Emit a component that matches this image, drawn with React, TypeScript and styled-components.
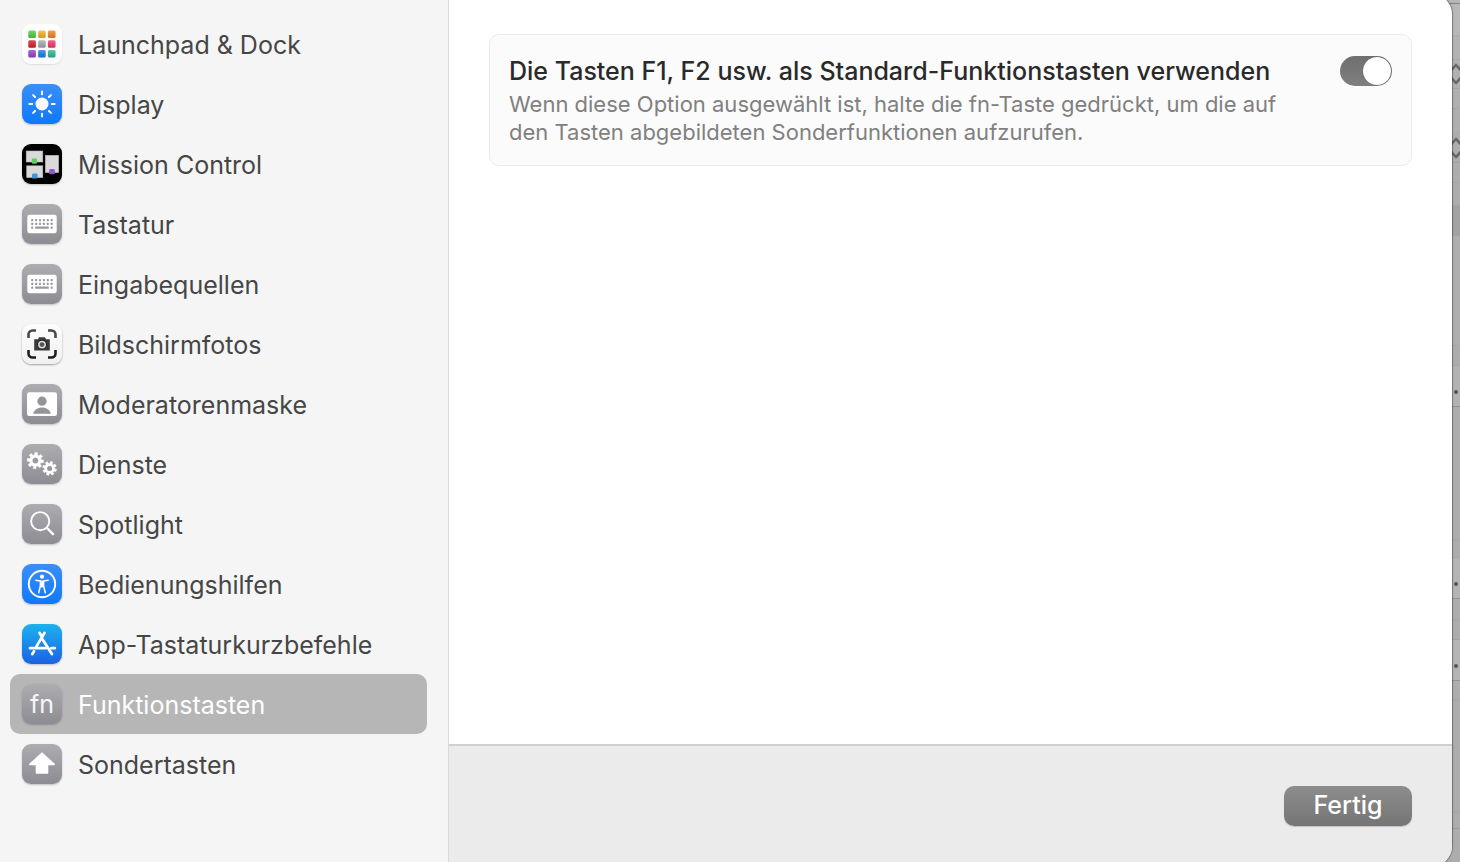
import React, { useId, useState } from 'react';
import styled, { createGlobalStyle } from 'styled-components';

const GlobalStyle = createGlobalStyle`
  *, *::before, *::after { box-sizing: border-box; }
  body {
    margin: 0;
    background: #adadad;
    font-family: Inter, "Liberation Sans", sans-serif;
    -webkit-font-smoothing: antialiased;
  }
  button { font: inherit; border: 0; cursor: default; }
`;

const Page = styled.div`
  display: flex;
  min-height: 100vh;
  overflow: hidden;
`;

const Sheet = styled.section`
  position: relative;
  z-index: 1;
  display: flex;
  flex: 1;
  min-width: 0;
  margin: -6px 0 -4px;
  overflow: hidden;
  background: #fff;
  border-radius: 0 20px 20px 0;
  box-shadow: 0 0 1px 1px rgba(0, 0, 0, 0.35);
`;

const Sidebar = styled.nav`
  flex: 0 0 449px;
  padding: 20px 21px 20px 10px;
  background: #f5f5f5;
  border-right: 1px solid #dadada;
`;

const SidebarList = styled.ul`
  margin: 0;
  padding: 0;
  list-style: none;
`;

const SidebarItem = styled.button<{ $selected: boolean }>`
  display: flex;
  align-items: center;
  gap: 16px;
  width: 100%;
  height: 60px;
  padding: 0 12px;
  border-radius: 10px;
  background: ${(p) => (p.$selected ? '#b6b6b6' : 'transparent')};
  color: ${(p) => (p.$selected ? '#fff' : '#464646')};
  font-size: 25px;
  line-height: 32px;
  text-align: left;
`;

const SidebarLabel = styled.span`
  padding-top: 2px;
`;

const tileFills = {
  white: 'linear-gradient(#ffffff, #fbfbfb)',
  paper: 'linear-gradient(#fdfdfd, #f0f0f0)',
  blue: 'linear-gradient(#3b8ff8, #0f78fb)',
  store: 'linear-gradient(#1db2ee, #1b62e4)',
  black: '#000',
  gray: 'linear-gradient(#acacb1, #8c8c92)',
};

const tileShadows: Partial<Record<keyof typeof tileFills, string>> = {
  white: '0 1px 2px rgba(0, 0, 0, 0.1)',
  paper: '0 1px 2px rgba(0, 0, 0, 0.35)',
};

const Tile = styled.span<{ $fill: keyof typeof tileFills }>`
  display: flex;
  flex: none;
  align-items: center;
  justify-content: center;
  width: 40px;
  height: 40px;
  border-radius: 9px;
  background: ${(p) => tileFills[p.$fill]};
  box-shadow: ${(p) => tileShadows[p.$fill] ?? '0 1px 2px rgba(0, 0, 0, 0.22)'};
  color: #f6f6f6;

  svg { display: block; width: 40px; height: 40px; }
`;

const KeyLabel = styled.span`
  font-size: 25px;
  font-weight: 400;
  line-height: 40px;
`;

const Pane = styled.div`
  display: flex;
  flex: 1;
  flex-direction: column;
  min-width: 0;
`;

const Content = styled.main`
  flex: 1;
  padding: 40px;
`;

const OptionCard = styled.div`
  display: flex;
  align-items: flex-start;
  justify-content: space-between;
  gap: 40px;
  padding: 20px 19px 19px;
  border: 1px solid #ebebeb;
  border-radius: 10px;
  background: #fbfbfb;
`;

const OptionText = styled.div`
  max-width: 790px;
`;

const OptionTitle = styled.label`
  display: block;
  color: #2a2a2a;
  font-size: 25px;
  font-weight: 500;
  line-height: 32px;
`;

const OptionHint = styled.p`
  margin: 3px 0 0;
  color: #808080;
  font-size: 22px;
  line-height: 28px;
`;

const Switch = styled.input`
  display: flex;
  flex: none;
  justify-content: flex-start;
  width: 52px;
  height: 30px;
  margin: 1px 0 0;
  padding: 1px;
  appearance: none;
  border-radius: 15px;
  background: #c8c8c8;

  &::before {
    content: '';
    width: 28px;
    height: 28px;
    border-radius: 50%;
    background: #fff;
    box-shadow: 0 0 1px rgba(0, 0, 0, 0.5);
  }

  &:checked {
    justify-content: flex-end;
    background: linear-gradient(#6f6f6f, #808080);
  }
`;

const Footer = styled.footer`
  display: flex;
  justify-content: flex-end;
  padding: 40px;
  border-top: 2px solid #d0d0d0;
  background: #ebebeb;
`;

const DoneButton = styled.button`
  width: 128px;
  height: 40px;
  padding: 0 0 2px;
  border-radius: 10px;
  background: linear-gradient(#8d8d8d, #757575);
  box-shadow: 0 1px 1px rgba(0, 0, 0, 0.18);
  color: #fff;
  font-size: 25px;
  font-weight: 500;
  line-height: 36px;
`;

const Backdrop = styled.div`
  display: flex;
  flex: 0 0 24px;
  flex-direction: column;
  margin-left: -16px;
  height: 100vh;
  overflow: hidden;
  background: #adadad;
`;

const Band = styled.div<{ $height: number; $shade: string; $edge: string }>`
  display: flex;
  flex: none;
  align-items: center;
  justify-content: flex-end;
  height: ${(p) => p.$height}px;
  border-bottom: 1px solid ${(p) => p.$edge};
  background: ${(p) => p.$shade};
`;

const Dot = styled.span`
  width: 4px;
  height: 4px;
  margin: 12px 2px 0 0;
  border-radius: 50%;
  background: #555;
`;

type Mark = 'stepper' | 'dot';
const bands: { height: number; shade: string; edge: string; mark?: Mark }[] = [
  { height: 4, shade: '#b6b6b6', edge: '#858585' },
  { height: 32, shade: '#b8b8b8', edge: '#acacac' },
  { height: 24, shade: '#b3b3b3', edge: '#a9a9a9' },
  { height: 29, shade: '#b0b0b0', edge: '#a4a4a4', mark: 'stepper' },
  { height: 20, shade: '#b0b0b0', edge: '#a6a6a6' },
  { height: 24, shade: '#afafaf', edge: '#aaaaaa' },
  { height: 30, shade: '#adadad', edge: '#a2a2a2', mark: 'stepper' },
  { height: 20, shade: '#adadad', edge: '#a4a4a4' },
  { height: 23, shade: '#adadad', edge: '#a4a4a4' },
  { height: 30, shade: '#a2a2a2', edge: '#a4a4a4' },
  { height: 110, shade: '#aeaeae', edge: '#a4a4a4' },
  { height: 20, shade: '#acacac', edge: '#a4a4a4' },
  { height: 41, shade: '#b2b2b2', edge: '#919191', mark: 'dot' },
  { height: 133, shade: '#adadad', edge: '#a4a4a4' },
  { height: 18, shade: '#acacac', edge: '#a4a4a4' },
  { height: 41, shade: '#b4b4b4', edge: '#939393', mark: 'dot' },
  { height: 21, shade: '#adadad', edge: '#a4a4a4' },
  { height: 20, shade: '#acacac', edge: '#a4a4a4' },
  { height: 41, shade: '#b4b4b4', edge: '#939393', mark: 'dot' },
  { height: 19, shade: '#adadad', edge: '#a4a4a4' },
  { height: 113, shade: '#acacac', edge: '#a4a4a4' },
  { height: 16, shade: '#acacac', edge: '#9c9c9c' },
];

const Stepper = () => (
  <svg width="10" height="22" viewBox="0 0 10 22" fill="none" stroke="#666" strokeWidth="2.4">
    <path d="M1 7.5 6 2l5 5.5M1 14.5 6 20l5-5.5" />
  </svg>
);

const LaunchpadIcon = () => {
  const rows = [
    ['#4fd14b', '#f7b52c', '#f5882a'],
    ['#d8262f', '#a9adb3', '#f23e6d'],
    ['#9a45cf', '#1f83e8', '#35b89b'],
  ];
  const shadeId = useId();
  return (
    <svg viewBox="0 0 40 40" aria-hidden="true">
      <defs>
        <linearGradient id={shadeId} x2="0" y2="1">
          <stop offset="0" stopColor="#fff" stopOpacity="0.2" />
          <stop offset="1" stopColor="#000" stopOpacity="0.14" />
        </linearGradient>
      </defs>
      {rows.map((row, y) =>
        row.map((color, x) => (
          <g key={color}>
            <rect x={6.3 + x * 9.8} y={6.6 + y * 9.7} width="7.6" height="7.4" rx="1.5" fill={color} />
            <rect x={6.3 + x * 9.8} y={6.6 + y * 9.7} width="7.6" height="7.4" rx="1.5" fill={`url(#${shadeId})`} />
          </g>
        )),
      )}
    </svg>
  );
};

const DisplayIcon = () => (
  <svg viewBox="0 0 40 40" aria-hidden="true">
    <circle cx="20" cy="20" r="6.5" fill="#fff" />
    <g stroke="#fff" strokeWidth="2" strokeLinecap="round">
      {[0, 45, 90, 135, 180, 225, 270, 315].map((angle) => (
        <path key={angle} d="M20 10.2V7.4" transform={`rotate(${angle} 20 20)`} />
      ))}
    </g>
  </svg>
);

const MissionControlIcon = () => (
  <svg viewBox="0 0 40 40" aria-hidden="true">
    <g fill="#d9d9d9" stroke="#b4b4b4" strokeWidth="0.6">
      <rect x="4.2" y="7" width="16.6" height="11" />
      <rect x="4.7" y="21.8" width="16.1" height="11.8" />
      <rect x="23.3" y="11.3" width="13.4" height="17.3" />
    </g>
    <rect x="9.7" y="14.6" width="5.4" height="5.2" rx="1.2" fill="#58cf60" />
    <rect x="10" y="29.4" width="5.6" height="5.2" rx="1.2" fill="#3d97e0" />
    <rect x="27.2" y="25" width="5.6" height="5.2" rx="1.2" fill="#9457c6" />
  </svg>
);

const KeyboardIcon = () => (
  <svg viewBox="0 0 40 40" aria-hidden="true">
    <rect x="5.3" y="10.7" width="29.4" height="18.6" rx="2.2" fill="#fff" />
    <g fill="#98989d">
      {[15, 18.8].map((y) =>
        [9.2, 13.1, 17, 20.9, 24.8, 28.7].map((x) => (
          <rect key={`${x}-${y}`} x={x} y={y} width="2" height="2.2" rx="0.4" />
        )),
      )}
      <rect x="9.2" y="22.6" width="2" height="2.2" rx="0.4" />
      <rect x="13.1" y="22.6" width="13.7" height="2.2" rx="0.6" />
      <rect x="28.7" y="22.6" width="2" height="2.2" rx="0.4" />
    </g>
  </svg>
);

const ScreenshotIcon = () => (
  <svg viewBox="0 0 40 40" fill="none" aria-hidden="true">
    <g strokeWidth="2.6">
      <path d="M6.5 14v-3.500a4 4 0 0 1 4-4H14M26 6.500h3.500a4 4 0 0 1 4 4V14" stroke="#4a4a4a" />
      <path d="M33.500 26v3.500a4 4 0 0 1-4 4H26M14 33.500h-3.500a4 4 0 0 1-4-4V26" stroke="#1c1c1c" />
    </g>
    <path d="M12.200 15.200h3.800l1-1.900h6l1 1.900h3.800v11.400H12.200z" fill="#3a3a3a" />
    <circle cx="20" cy="20.600" r="4.800" fill="#1e1e1e" />
    <circle cx="20" cy="20.600" r="3.200" fill="#555" stroke="#dcdcdc" strokeWidth="1.500" />
  </svg>
);

const PresenterIcon = () => (
  <svg viewBox="0 0 40 40" aria-hidden="true">
    <rect x="5" y="8.200" width="30" height="23.700" rx="2.200" fill="#fff" />
    <circle cx="20" cy="17.200" r="4.600" fill="#949499" />
    <path d="M11.200 29.700c.8-3.700 4.400-6.200 8.800-6.200s8 2.500 8.800 6.200z" fill="#949499" />
  </svg>
);

function gearPath(cx: number, cy: number, outer: number, inner: number, turn: number) {
  const teeth = 8;
  const step = (Math.PI * 2) / teeth;
  const points: string[] = [];
  const corners: [number, number][] = [
    [inner, -0.3],
    [outer, -0.2],
    [outer, 0.2],
    [inner, 0.3],
  ];
  for (let i = 0; i < teeth; i += 1) {
    corners.forEach(([radius, offset]) => {
      const angle = turn + (i + offset) * step;
      points.push(`${(cx + radius * Math.cos(angle)).toFixed(2)} ${(cy + radius * Math.sin(angle)).toFixed(2)}`);
    });
  }
  return `M${points.join('L')}Z`;
}

const GearsIcon = () => (
  <svg viewBox="0 0 40 40" aria-hidden="true">
    <g fill="#fff" stroke="#fff" strokeWidth="0.600" strokeLinejoin="round">
      <path d={gearPath(13.4, 16.6, 8.2, 5.8, 0.1)} />
      <path d={gearPath(27.6, 24.4, 7, 5, 0.3)} />
    </g>
    <circle cx="13.400" cy="16.600" r="2.900" fill="#9c9ca1" />
    <circle cx="27.600" cy="24.400" r="2.500" fill="#96969b" />
  </svg>
);

const SpotlightIcon = () => (
  <svg viewBox="0 0 40 40" fill="none" stroke="#fff" strokeLinecap="round" aria-hidden="true">
    <circle cx="18.200" cy="17.200" r="9.100" strokeWidth="1.900" />
    <path d="m25 24 6 6.200" strokeWidth="2.500" />
  </svg>
);

const AccessibilityIcon = () => (
  <svg viewBox="0 0 40 40" aria-hidden="true">
    <circle cx="20" cy="20" r="13.200" fill="none" stroke="#fff" strokeWidth="1.900" />
    <circle cx="20" cy="12.700" r="2.100" fill="#fff" />
    <path
      d="M13.800 16.200 18.400 17v4.600l-1.700 7.200M26.200 16.200 21.600 17v4.600l1.700 7.200"
      fill="none"
      stroke="#fff"
      strokeWidth="1.500"
      strokeLinecap="round"
      strokeLinejoin="round"
    />
    <path d="M18 16.400h4v5.600l-.8 1.400h-2.400l-.8-1.400z" fill="#fff" />
  </svg>
);

const AppStoreIcon = () => (
  <svg viewBox="0 0 40 40" fill="none" stroke="#fff" strokeWidth="2.800" strokeLinecap="round" aria-hidden="true">
    <path d="M22.400 9 13.800 23.600M12 27.200l-1.700 2.900M17.600 9l2.200 3.600M20.600 15.500l9.300 14.600" />
    <path d="M8 24.200h15.800M29.400 24.200h3.400" />
  </svg>
);

const ShiftIcon = () => (
  <svg viewBox="0 0 40 40" aria-hidden="true">
    <path
      d="M20 9.300 7.900 20.300h6.700v8.500h10.800v-8.500h6.700z"
      fill="#fff"
      stroke="#fff"
      strokeWidth="1.800"
      strokeLinejoin="round"
    />
  </svg>
);

const sections: { name: string; fill: keyof typeof tileFills; icon: React.ReactNode }[] = [
  { name: 'Launchpad & Dock', fill: 'white', icon: <LaunchpadIcon /> },
  { name: 'Display', fill: 'blue', icon: <DisplayIcon /> },
  { name: 'Mission Control', fill: 'black', icon: <MissionControlIcon /> },
  { name: 'Tastatur', fill: 'gray', icon: <KeyboardIcon /> },
  { name: 'Eingabequellen', fill: 'gray', icon: <KeyboardIcon /> },
  { name: 'Bildschirmfotos', fill: 'paper', icon: <ScreenshotIcon /> },
  { name: 'Moderatorenmaske', fill: 'gray', icon: <PresenterIcon /> },
  { name: 'Dienste', fill: 'gray', icon: <GearsIcon /> },
  { name: 'Spotlight', fill: 'gray', icon: <SpotlightIcon /> },
  { name: 'Bedienungshilfen', fill: 'blue', icon: <AccessibilityIcon /> },
  { name: 'App-Tastaturkurzbefehle', fill: 'store', icon: <AppStoreIcon /> },
  { name: 'Funktionstasten', fill: 'gray', icon: <KeyLabel>fn</KeyLabel> },
  { name: 'Sondertasten', fill: 'gray', icon: <ShiftIcon /> },
];

export default function App() {
  const [selected, setSelected] = useState('Funktionstasten');
  const [standardKeys, setStandardKeys] = useState(true);

  return (
    <>
      <GlobalStyle />
      <Page>
        <Sheet>
          <Sidebar>
            <SidebarList>
              {sections.map(({ name, fill, icon }) => (
                <li key={name}>
                  <SidebarItem type="button" $selected={name === selected} onClick={() => setSelected(name)}>
                    <Tile $fill={fill}>{icon}</Tile>
                    <SidebarLabel>{name}</SidebarLabel>
                  </SidebarItem>
                </li>
              ))}
            </SidebarList>
          </Sidebar>
          <Pane>
            <Content>
              <OptionCard>
                <OptionText>
                  <OptionTitle htmlFor="standard-keys">
                    Die Tasten F1, F2 usw. als Standard-Funktionstasten verwenden
                  </OptionTitle>
                  <OptionHint id="standard-keys-hint">
                    Wenn diese Option ausgewählt ist, halte die fn-Taste gedrückt, um die auf den Tasten abgebildeten
                    Sonderfunktionen aufzurufen.
                  </OptionHint>
                </OptionText>
                <Switch
                  id="standard-keys"
                  type="checkbox"
                  role="switch"
                  aria-describedby="standard-keys-hint"
                  checked={standardKeys}
                  onChange={(event) => setStandardKeys(event.target.checked)}
                />
              </OptionCard>
            </Content>
            <Footer>
              <DoneButton type="button">Fertig</DoneButton>
            </Footer>
          </Pane>
        </Sheet>
        <Backdrop aria-hidden="true">
          {bands.map(({ height, shade, edge, mark }, index) => (
            <Band key={index} $height={height} $shade={shade} $edge={edge}>
              {mark === 'stepper' && <Stepper />}
              {mark === 'dot' && <Dot />}
            </Band>
          ))}
        </Backdrop>
      </Page>
    </>
  );
}
